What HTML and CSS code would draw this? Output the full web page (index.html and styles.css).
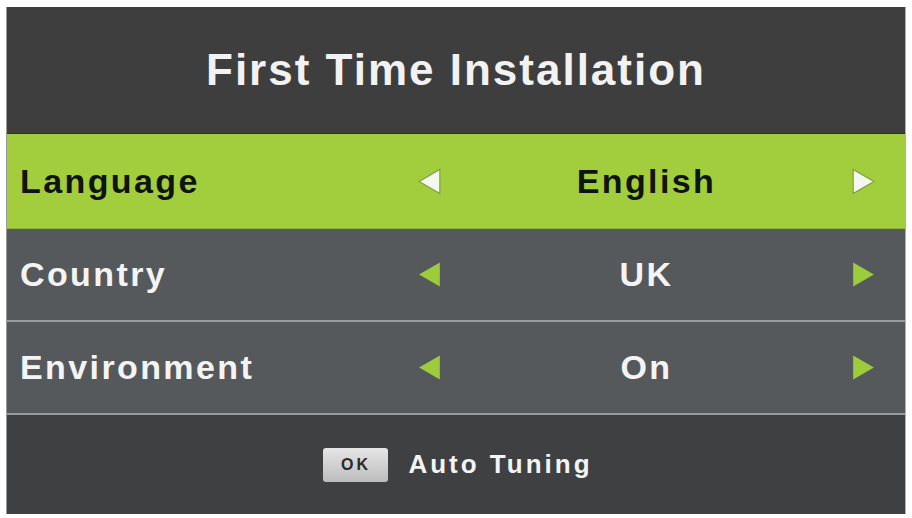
FILE: index.html
```html
<!DOCTYPE html>
<html lang="en">
<head>
    <meta charset="UTF-8">
    <meta name="viewport" content="width=device-width, initial-scale=1.0">
    <title>First Time Installation</title>
    <link rel="stylesheet" href="styles.css">
</head>
<body>
    <div class="panel">
        <div class="title-bar">First Time Installation</div>

        <div class="menu-row active">
            <span class="label">Language</span>
            <svg class="arrow" viewBox="0 0 22 24"><polygon points="20,1 20,23 1,12"/></svg>
            <span class="value">English</span>
            <svg class="arrow" viewBox="0 0 22 24"><polygon points="2,1 2,23 21,12"/></svg>
        </div>

        <div class="menu-row">
            <span class="label">Country</span>
            <svg class="arrow" viewBox="0 0 22 24"><polygon points="20,1 20,23 1,12"/></svg>
            <span class="value">UK</span>
            <svg class="arrow" viewBox="0 0 22 24"><polygon points="2,1 2,23 21,12"/></svg>
        </div>

        <div class="menu-row">
            <span class="label">Environment</span>
            <svg class="arrow" viewBox="0 0 22 24"><polygon points="20,1 20,23 1,12"/></svg>
            <span class="value">On</span>
            <svg class="arrow" viewBox="0 0 22 24"><polygon points="2,1 2,23 21,12"/></svg>
        </div>

        <div class="footer">
            <span class="key">OK</span>
            <span class="hint">Auto Tuning</span>
        </div>
    </div>
</body>
</html>
```

FILE: styles.css
```css
body {
    margin: 0;
    background-color: #ffffff;
    font-family: 'Liberation Sans', Arial, sans-serif;
}
.panel {
    margin: 7px 0 0 7px;
    width: 898px;
    height: 507px;
    display: flex;
    flex-direction: column;
    background-color: #3f4042;
    box-shadow: -1px 0 0 #9a9a9a, 1px 0 0 #b0b0b0;
}
.title-bar {
    height: 126px;
    display: flex;
    align-items: center;
    justify-content: center;
    background-color: #3e3e3e;
    color: #f2f2f2;
    font-size: 44px;
    font-weight: bold;
    letter-spacing: 2px;
    line-height: 1;
    border-bottom: 1px solid #2e2e2e;
}
.menu-row {
    height: 91px;
    display: grid;
    grid-template-columns: 392px 36px 1fr 36px;
    align-items: center;
    padding: 0 24px 0 13px;
    background-color: #56595c;
    color: #f4f4f4;
    font-size: 34px;
    font-weight: bold;
    letter-spacing: 2.4px;
    border-bottom: 2px solid #9a9c9f;
}
.menu-row.active {
    height: 94px;
    background-color: #a2cd3c;
    color: #101410;
    border-bottom: 1px solid #8fb338;
}
.label {
    white-space: nowrap;
}
.value {
    text-align: center;
}
.arrow {
    width: 24px;
    height: 27px;
    justify-self: center;
    fill: #9ccb3c;
}
.menu-row.active .arrow {
    fill: #f4f7ee;
    stroke: #7f9c40;
    stroke-width: 1;
}
.footer {
    flex: 1;
    display: flex;
    align-items: center;
    justify-content: center;
    gap: 20px;
    background-color: #3f4042;
    padding-left: 4px;
}
.key {
    width: 65px;
    height: 34px;
    display: flex;
    align-items: center;
    justify-content: center;
    background: linear-gradient(#e6e6e6, #bcbcbc);
    border-radius: 3px;
    color: #2a2a2a;
    font-size: 16px;
    font-weight: bold;
    letter-spacing: 3px;
}
.hint {
    color: #f4f4f4;
    font-size: 26px;
    font-weight: bold;
    letter-spacing: 3px;
}
```
